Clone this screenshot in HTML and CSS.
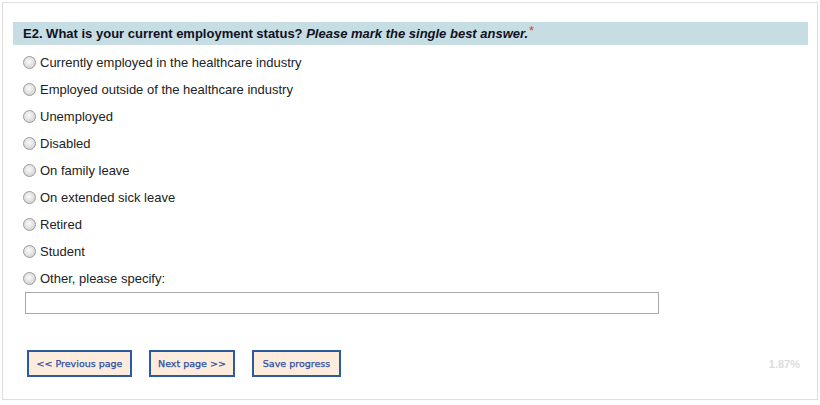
FILE: index.html
```html
<!DOCTYPE html>
<html>
<head>
<meta charset="utf-8">
<link rel="stylesheet" href="styles.css">
</head>
<body>
<div class="survey">
  <div class="question">
    <div class="q-title">E2. What is your current employment status? <em>Please mark the single best answer.</em><span class="req">*</span></div>
    <div class="options">
      <label class="opt"><input type="radio" name="e2"><span>Currently employed in the healthcare industry</span></label>
      <label class="opt"><input type="radio" name="e2"><span>Employed outside of the healthcare industry</span></label>
      <label class="opt"><input type="radio" name="e2"><span>Unemployed</span></label>
      <label class="opt"><input type="radio" name="e2"><span>Disabled</span></label>
      <label class="opt"><input type="radio" name="e2"><span>On family leave</span></label>
      <label class="opt"><input type="radio" name="e2"><span>On extended sick leave</span></label>
      <label class="opt"><input type="radio" name="e2"><span>Retired</span></label>
      <label class="opt"><input type="radio" name="e2"><span>Student</span></label>
      <label class="opt"><input type="radio" name="e2"><span>Other, please specify:</span></label>
      <input class="other-text" type="text">
    </div>
  </div>
  <div class="nav">
    <div class="buttons">
      <button class="btn">&lt;&lt; Previous page</button>
      <button class="btn">Next page &gt;&gt;</button>
      <button class="btn">Save progress</button>
    </div>
    <div class="progress">1.87%</div>
  </div>
</div>
</body>
</html>
```

FILE: styles.css
```css
* { box-sizing: border-box; }
html, body { margin: 0; padding: 0; background: #fff; }
body { font-family: "Liberation Sans", Arial, sans-serif; }

.survey {
  margin: 2px 0 0 2px;
  width: 816px;
  height: 398px;
  border: 1px solid #dedede;
  padding: 19px 9px 0 10px;
}

.q-title {
  background: #c5dde3;
  height: 23px;
  line-height: 23px;
  padding-left: 10px;
  font-size: 13px;
  font-weight: bold;
  color: #111122;
}
.q-title em { font-style: italic; }
.req { color: #e0401c; font-weight: normal; position: relative; top: -3px; margin-left: 1px; }

.options { padding: 4px 0 0 10px; display: flex; flex-direction: column; }
.opt {
  display: flex;
  align-items: center;
  height: 27px;
  font-size: 13px;
  color: #222;
}
.opt input {
  appearance: none;
  -webkit-appearance: none;
  width: 13px;
  height: 13px;
  margin: 0 4px 0 0;
  border-radius: 50%;
  border: 1px solid #9a9a9a;
  background: radial-gradient(circle at 45% 40%, #fafafa 0%, #e2e2e2 50%, #c8c8c8 100%);
}
.other-text {
  margin: 0 0 0 2px;
  width: 634px;
  height: 22px;
  border: 1px solid #a9a9a9;
  background: #fff;
}

.nav {
  display: flex;
  justify-content: space-between;
  align-items: center;
  margin-top: 36px;
  padding-left: 14px;
  padding-right: 8px;
}
.buttons { display: flex; gap: 17px; }
.btn {
  height: 27px;
  padding: 0;
  white-space: nowrap;
  background: #fdebdb;
  border: 2px solid #2c5a9e;
  font-family: "DejaVu Sans", Verdana, sans-serif;
  font-size: 9.5px;
  font-weight: normal;
  -webkit-text-stroke: 0.25px #2c4ea2;
  color: #2c4ea2;
}
.btn:nth-child(1) { width: 105px; }
.btn:nth-child(2) { width: 86px; }
.btn:nth-child(3) { width: 89px; }
.progress {
  font-size: 11px;
  font-weight: bold;
  color: #dcdcdc;
}
```
